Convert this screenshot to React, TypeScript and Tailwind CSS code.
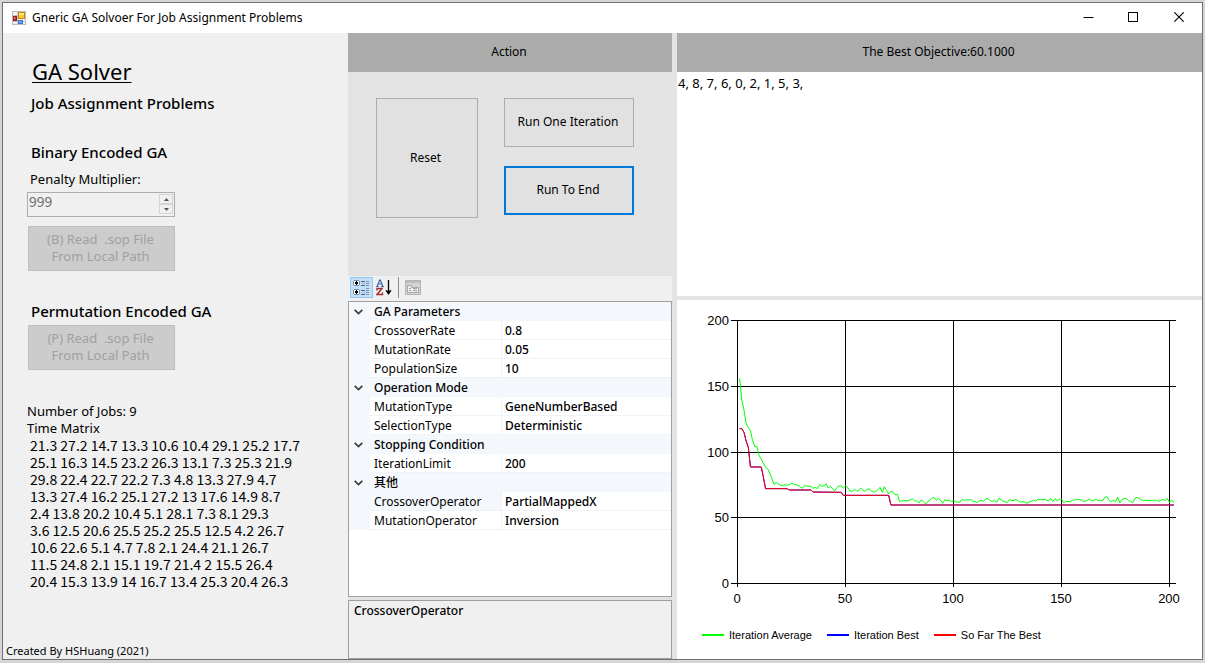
import React, { Fragment } from 'react';

const matrix = [
  '21.3 27.2 14.7 13.3 10.6 10.4 29.1 25.2 17.7',
  '25.1 16.3 14.5 23.2 26.3 13.1 7.3 25.3 21.9',
  '29.8 22.4 22.7 22.2 7.3 4.8 13.3 27.9 4.7',
  '13.3 27.4 16.2 25.1 27.2 13 17.6 14.9 8.7',
  '2.4 13.8 20.2 10.4 5.1 28.1 7.3 8.1 29.3',
  '3.6 12.5 20.6 25.5 25.2 25.5 12.5 4.2 26.7',
  '10.6 22.6 5.1 4.7 7.8 2.1 24.4 21.1 26.7',
  '11.5 24.8 2.1 15.1 19.7 21.4 2 15.5 26.4',
  '20.4 15.3 13.9 14 16.7 13.4 25.3 20.4 26.3',
];

type Group = { title: string; rows: [string, string][] };

const groups: Group[] = [
  {
    title: 'GA Parameters',
    rows: [
      ['CrossoverRate', '0.8'],
      ['MutationRate', '0.05'],
      ['PopulationSize', '10'],
    ],
  },
  {
    title: 'Operation Mode',
    rows: [
      ['MutationType', 'GeneNumberBased'],
      ['SelectionType', 'Deterministic'],
    ],
  },
  { title: 'Stopping Condition', rows: [['IterationLimit', '200']] },
  {
    title: '其他',
    rows: [
      ['CrossoverOperator', 'PartialMappedX'],
      ['MutationOperator', 'Inversion'],
    ],
  },
];

const selected = 'CrossoverOperator';

// Population average per iteration, in plot units (three to a pixel, growing downwards).
const average = [
  265, 330, 360, 400, 413, 422, 452, 469, 470, 497, 507, 520, 532, 537, 550, 567, 583, 578, 582, 586,
  586, 584, 586, 584, 580, 582, 584, 586, 590, 595, 586, 588, 589, 590, 595, 592, 596, 583, 589, 588,
  581, 594, 589, 595, 603, 593, 588, 588, 594, 588, 592, 603, 604, 599, 602, 603, 594, 600, 604, 599,
  596, 604, 606, 604, 599, 592, 607, 590, 602, 612, 604, 606, 615, 613, 634, 633, 631, 633, 632, 630,
  626, 633, 633, 639, 630, 634, 641, 637, 629, 625, 622, 631, 625, 630, 640, 629, 632, 630, 635, 633,
  634, 637, 636, 628, 631, 629, 630, 629, 634, 635, 637, 632, 631, 634, 626, 626, 632, 634, 631, 637,
  625, 629, 634, 636, 637, 628, 632, 631, 629, 633, 636, 635, 636, 640, 636, 634, 630, 633, 628, 628,
  628, 628, 630, 633, 625, 635, 626, 632, 628, 627, 638, 635, 634, 635, 631, 630, 628, 628, 629, 634,
  634, 631, 626, 633, 631, 629, 631, 631, 633, 622, 620, 631, 635, 631, 635, 621, 639, 629, 625, 626,
  631, 634, 638, 625, 622, 626, 630, 632, 631, 631, 631, 631, 631, 631, 634, 631, 628, 632, 625, 637,
  630, 638,
];

// Points where the best objective changes: [iteration, plot units].
const best: [number, number][] = [
  [1, 416], [2, 416], [3, 427], [4, 453], [5, 472], [6, 531], [11, 531], [12, 562], [13, 596], [23, 596],
  [24, 600], [34, 600], [35, 606], [48, 607], [49, 616], [70, 616], [71, 645], [202, 645],
];

const toPoint = (n: number, y: number) => `${(60.5 + n * 2.16).toFixed(2)},${(y / 3 - 10).toFixed(2)}`;
const averagePoints = average.map((y, i) => toPoint(i + 1, y)).join(' ');
const bestPoints = best.map(([n, y]) => toPoint(n, y)).join(' ');

const yTicks: [number, string][] = [[20, '200'], [86, '150'], [152, '100'], [217, '50'], [283, '0']];
const xTicks: [number, string][] = [[60, '0'], [168, '50'], [276, '100'], [384, '150'], [492, '200']];

function Chart() {
  return (
    <svg viewBox="0 0 525 310" className="block w-full font-['Liberation_Sans',sans-serif] text-[13px]" role="img" aria-label="Objective per iteration">
      <g stroke="#000" shapeRendering="crispEdges">
        {yTicks.map(([y]) => (
          <line key={y} x1="54" x2="499" y1={y + 0.5} y2={y + 0.5} />
        ))}
        {xTicks.map(([x]) => (
          <line key={x} x1={x + 0.5} x2={x + 0.5} y1="20" y2="287" />
        ))}
      </g>
      {yTicks.map(([y, label]) => (
        <text key={label} x="52" y={y + 5} textAnchor="end">{label}</text>
      ))}
      {xTicks.map(([x, label]) => (
        <text key={label} x={x} y="303" textAnchor="middle">{label}</text>
      ))}
      <polyline points={averagePoints} fill="none" stroke="#00ff00" />
      <polyline points={bestPoints} fill="none" stroke="#0000ff" />
      <polyline points={bestPoints} fill="none" stroke="#ff0000" />
    </svg>
  );
}

function AppIcon() {
  return (
    <svg width="14" height="14" viewBox="0 0 14 14" aria-hidden="true">
      <rect x="0.5" y="0.5" width="13" height="13" fill="#f4f4f4" stroke="#bcbcbc" />
      <path d="M5.5 0v14M0 4.5h5M0 10.5h14" stroke="#c4c4c4" />
      <rect x="6.5" y="1.5" width="6" height="6" fill="#fbc62f" stroke="#c08a10" />
      <rect x="7" y="2" width="5" height="2" fill="#ffe48a" />
      <rect x="1.5" y="5.5" width="3" height="4" fill="#c8372d" stroke="#8c1f19" />
      <rect x="2" y="6" width="1" height="2" fill="#ee9088" />
      <rect x="6.5" y="9.5" width="4" height="3" fill="#73a3f0" stroke="#3d74d6" />
    </svg>
  );
}

function CategorizedIcon() {
  return (
    <svg width="17" height="17" viewBox="0 0 17 17" shapeRendering="crispEdges" aria-hidden="true">
      {[1, 10].map((y) => (
        <g key={y}>
          <path d={`M1 ${y}h5v1h1v4h-1v1h-5v-1h-1v-4h1z`} fill="#7b8fa8" />
          <rect x="1" y={y + 1} width="5" height="4" fill="#fff" />
          <path d={`M2 ${y + 2}h3v2h-3zM3 ${y + 1}h1v4h-1z`} fill="#000" />
        </g>
      ))}
      <path d="M8 2.5h4M8 6.5h4M8 11.5h4M8 15.5h4" stroke="#4a6690" />
      <path d="M9 4.5h3M9 13.5h3" stroke="#a3b4cb" />
      <path d="M13 2.5h3M13 4.5h3M13 6.5h3M13 9.5h3M13 11.5h3M13 13.5h3M13 15.5h3" stroke="#7b93b8" />
    </svg>
  );
}

function SortIcon() {
  return (
    <svg width="16" height="17" viewBox="0 0 16 17" aria-hidden="true">
      <path d="M1.3 7L3.700 1h.600l2.400 6M2.300 5h3.500M0 7.500h2.500M5 7.500h3" fill="none" stroke="#3b62ad" strokeWidth="1.200" />
      <path d="M1 11.500v-2h5L1 15.500h5.500v-2" fill="none" stroke="#9c2f36" strokeWidth="1.400" />
      <path d="M12.500 1v13" stroke="#000" strokeWidth="1.300" />
      <path d="M9.800 10.800l2.700 1.400l2.700-1.400v1.200L12.500 16L9.800 12z" fill="#000" />
    </svg>
  );
}

function PagesIcon() {
  return (
    <svg width="16" height="15" viewBox="0 0 16 15" shapeRendering="crispEdges" aria-hidden="true">
      <rect x="0.5" y="0.5" width="15" height="14" fill="#d4d4d4" stroke="#b4b4b4" />
      <path d="M1 1.500h14M1 2.500h14" stroke="#bdbdbd" />
      <path d="M2.500 12.500v-7h4v2h7v5z" fill="#ececec" stroke="#a8a8a8" />
      <path d="M4 8.500h2M8 8.500h4M4 10.500h2M8 10.500h4" stroke="#a0a0a0" />
    </svg>
  );
}

function ReadButton({ kind }: { kind: string }) {
  return (
    <button
      type="button"
      disabled
      className="ml-[25px] flex h-[45px] w-[147px] flex-col items-center justify-center border border-[#bfbfbf] bg-[#cccccc] pr-[2px] pb-[2px] text-[13px] leading-[17px] text-[#a0a0a0]"
    >
      <span className="whitespace-pre">{`(${kind}) Read  .sop File`}</span>
      <span>From Local Path</span>
    </button>
  );
}

function LeftPanel() {
  return (
    <section className="flex flex-col bg-[#f0f0f0] pt-6">
      <h1 className="pl-[29px] text-[22px] leading-7 underline decoration-1 underline-offset-2">GA Solver</h1>
      <h2 className="mt-[6px] pl-7 text-[15px] leading-6 font-medium">Job Assignment Problems</h2>
      <h3 className="mt-[25px] pl-7 text-[15px] leading-6 font-medium">Binary Encoded GA</h3>
      <label htmlFor="penalty" className="mt-[7px] pl-[27px] text-[13px] leading-[17px]">
        Penalty Multiplier:
      </label>
      <div className="mt-1 ml-6 flex h-[25px] w-[148px] border border-[#abadb3] bg-[#f0f0f0] p-px">
        <input
          id="penalty"
          disabled
          defaultValue="999"
          className="h-[15px] min-w-0 flex-1 font-['Noto_Sans_CJK_TC',sans-serif] text-sm leading-[15px] text-[#6d6d6d]"
        />
        <div className="flex w-[14px] flex-col">
          <button type="button" disabled aria-label="Increase" className="flex h-[10px] items-center justify-center border border-[#d4d4d4]">
            <svg width="5" height="3" viewBox="0 0 5 3" aria-hidden="true"><path d="M0 3L2.500 0L5 3z" fill="#555" /></svg>
          </button>
          <button type="button" disabled aria-label="Decrease" className="flex h-[10px] items-center justify-center border border-[#d4d4d4]">
            <svg width="5" height="3" viewBox="0 0 5 3" aria-hidden="true"><path d="M0 0h5L2.500 3z" fill="#555" /></svg>
          </button>
        </div>
      </div>
      <div className="mt-[9px]"><ReadButton kind="B" /></div>
      <h3 className="mt-7 pl-7 text-[15px] leading-6 font-medium">Permutation Encoded GA</h3>
      <div className="mt-[2px]"><ReadButton kind="P" /></div>
      <div className="mt-[33px] pl-6 text-[13px] leading-[17px]">
        <p>Number of Jobs: 9</p>
        <p>Time Matrix</p>
        <pre className="pl-[3px] font-['Noto_Sans_CJK_TC',sans-serif] text-sm leading-[17px]">{matrix.join('\n')}</pre>
      </div>
      <p className="mt-auto pl-[3px] text-[11px] leading-4">Created By HSHuang (2021)</p>
    </section>
  );
}

function PropertyGrid() {
  return (
    <div className="flex-1 border border-[#a0a0a0] bg-white">
      <table className="w-full table-fixed border-separate border-spacing-0 text-xs">
        <colgroup>
          <col className="w-[21px]" />
          <col className="w-[132px]" />
          <col />
        </colgroup>
        <tbody>
          {groups.map((group) => (
            <Fragment key={group.title}>
              <tr className="h-[19px] bg-[#f4f7fc]">
                <td className="p-0">
                  <button type="button" aria-label={`Collapse ${group.title}`} className="flex h-[18px] w-[19px] items-center justify-center">
                    <svg width="9" height="6" viewBox="0 0 9 6" aria-hidden="true">
                      <path d="M0.700 0.800L4.500 4.600L8.300 0.800" fill="none" stroke="#404040" strokeWidth="1.800" />
                    </svg>
                  </button>
                </td>
                <th colSpan={2} className="p-0 pl-1 text-left font-['Noto_Sans','Noto_Sans_CJK_TC',sans-serif] text-xs leading-[18px] font-medium">
                  {group.title}
                </th>
              </tr>
              {group.rows.map(([name, value]) => (
                <tr key={name} className="h-[19px]">
                  <td className="bg-[#f4f7fc] p-0" />
                  <th
                    scope="row"
                    className={`border-r border-b border-[#f0f2f8] p-0 pt-[2px] pl-1 text-left leading-4 font-normal ${name === selected ? 'bg-[#f4f7fc]' : ''}`}
                  >
                    {name}
                  </th>
                  <td className="border-b border-[#f0f2f8] p-0 pt-[2px] pl-[3px] leading-4 font-medium">{value}</td>
                </tr>
              ))}
            </Fragment>
          ))}
        </tbody>
      </table>
    </div>
  );
}

function MiddlePanel() {
  return (
    <section className="flex flex-col">
      <h2 className="flex h-[39px] items-center justify-center bg-[#ababab] pr-[2px] pb-[2px] text-xs">Action</h2>
      <div className="flex h-[204px] items-start gap-[26px] pt-[26px] pl-7 text-xs">
        <button type="button" className="h-[120px] w-[102px] border border-[#adadad] bg-[#e1e1e1] pr-[3px]">Reset</button>
        <div className="flex flex-col gap-[19px]">
          <button type="button" className="h-[49px] w-[130px] border border-[#adadad] bg-[#e1e1e1] pr-[2px] pb-[2px]">Run One Iteration</button>
          <button type="button" className="h-[49px] w-[130px] border-2 border-[#0078d7] bg-[#e1e1e1] pr-[2px] pb-[2px]">Run To End</button>
        </div>
      </div>
      <div className="flex h-[25px] items-start bg-[#f0f0f0] pt-px pl-[2px]">
        <button type="button" aria-label="Categorized" className="flex h-[21px] w-[23px] items-center justify-center border border-[#90c8f6] bg-[#c4dff5]">
          <CategorizedIcon />
        </button>
        <button type="button" aria-label="Alphabetical" className="flex h-[21px] w-[22px] items-center justify-center">
          <SortIcon />
        </button>
        <div className="ml-[3px] h-[21px] w-px bg-[#8c8c8c]" />
        <button type="button" disabled aria-label="Property Pages" className="ml-[2px] flex h-[21px] w-[23px] items-center justify-center">
          <PagesIcon />
        </button>
      </div>
      <PropertyGrid />
      <div className="mt-[3px] h-[59px] border border-[#a0a0a0] bg-[#f0f0f0] pl-[5px] text-xs leading-5 font-medium">
        {selected}
      </div>
    </section>
  );
}

function RightPanel() {
  return (
    <section className="flex flex-col">
      <h2 className="flex h-[39px] items-center justify-center bg-[#ababab] pr-[2px] pb-[2px] text-xs">The Best Objective:60.1000</h2>
      <textarea
        readOnly
        aria-label="Best solution"
        defaultValue="4, 8, 7, 6, 0, 2, 1, 5, 3, "
        className="block h-56 w-full resize-none bg-white px-px pt-[3px] text-[13px] leading-[17px] outline-none"
      />
      <div className="mt-1 flex-1 bg-white">
        <Chart />
        <ul className="mt-[17px] flex gap-[15px] pl-[25px] font-['Liberation_Sans',sans-serif] text-[11px] leading-4">
          <li className="flex items-center gap-[5px]"><span className="h-[2px] w-[22px] bg-[#00ff00]" />Iteration Average</li>
          <li className="flex items-center gap-[5px]"><span className="h-[2px] w-[22px] bg-[#0000ff]" />Iteration Best</li>
          <li className="flex items-center gap-[5px]"><span className="h-[2px] w-[22px] bg-[#ff0000]" />So Far The Best</li>
        </ul>
      </div>
    </section>
  );
}

export default function App() {
  return (
    <main className="flex min-h-screen flex-col bg-[#d6d6d6] px-[2px] pt-[2px] pb-[3px] font-['Noto_Sans',sans-serif] text-black">
      <div className="flex flex-1 flex-col border border-[#707070] bg-[#e3e3e3]">
        <header className="flex h-[30px] items-center bg-white pl-[9px] text-xs">
          <AppIcon />
          <span className="ml-[6px] flex-1">Gneric GA Solvoer For Job Assignment Problems</span>
          <button type="button" aria-label="Minimize" className="flex h-[30px] w-[45px] items-center justify-center">
            <svg width="11" height="11" viewBox="0 0 11 11" aria-hidden="true"><path d="M0.500 4.500h10" stroke="#000" /></svg>
          </button>
          <button type="button" aria-label="Maximize" className="flex h-[30px] w-[45px] items-center justify-center pb-px">
            <svg width="11" height="11" viewBox="0 0 11 11" aria-hidden="true"><rect x="0.500" y="0.500" width="9" height="9" fill="none" stroke="#000" /></svg>
          </button>
          <button type="button" aria-label="Close" className="flex h-[30px] w-[46px] items-center justify-center pb-[2px]">
            <svg width="10" height="10" viewBox="0 0 10 10" aria-hidden="true"><path d="M0.300 0.300l9.400 9.400M9.700 0.300l-9.400 9.400" stroke="#000" strokeWidth="1.100" /></svg>
          </button>
        </header>
        <div className="grid flex-1 grid-cols-[345fr_324fr_5px_525fr]">
          <LeftPanel />
          <MiddlePanel />
          <div />
          <RightPanel />
        </div>
      </div>
    </main>
  );
}
